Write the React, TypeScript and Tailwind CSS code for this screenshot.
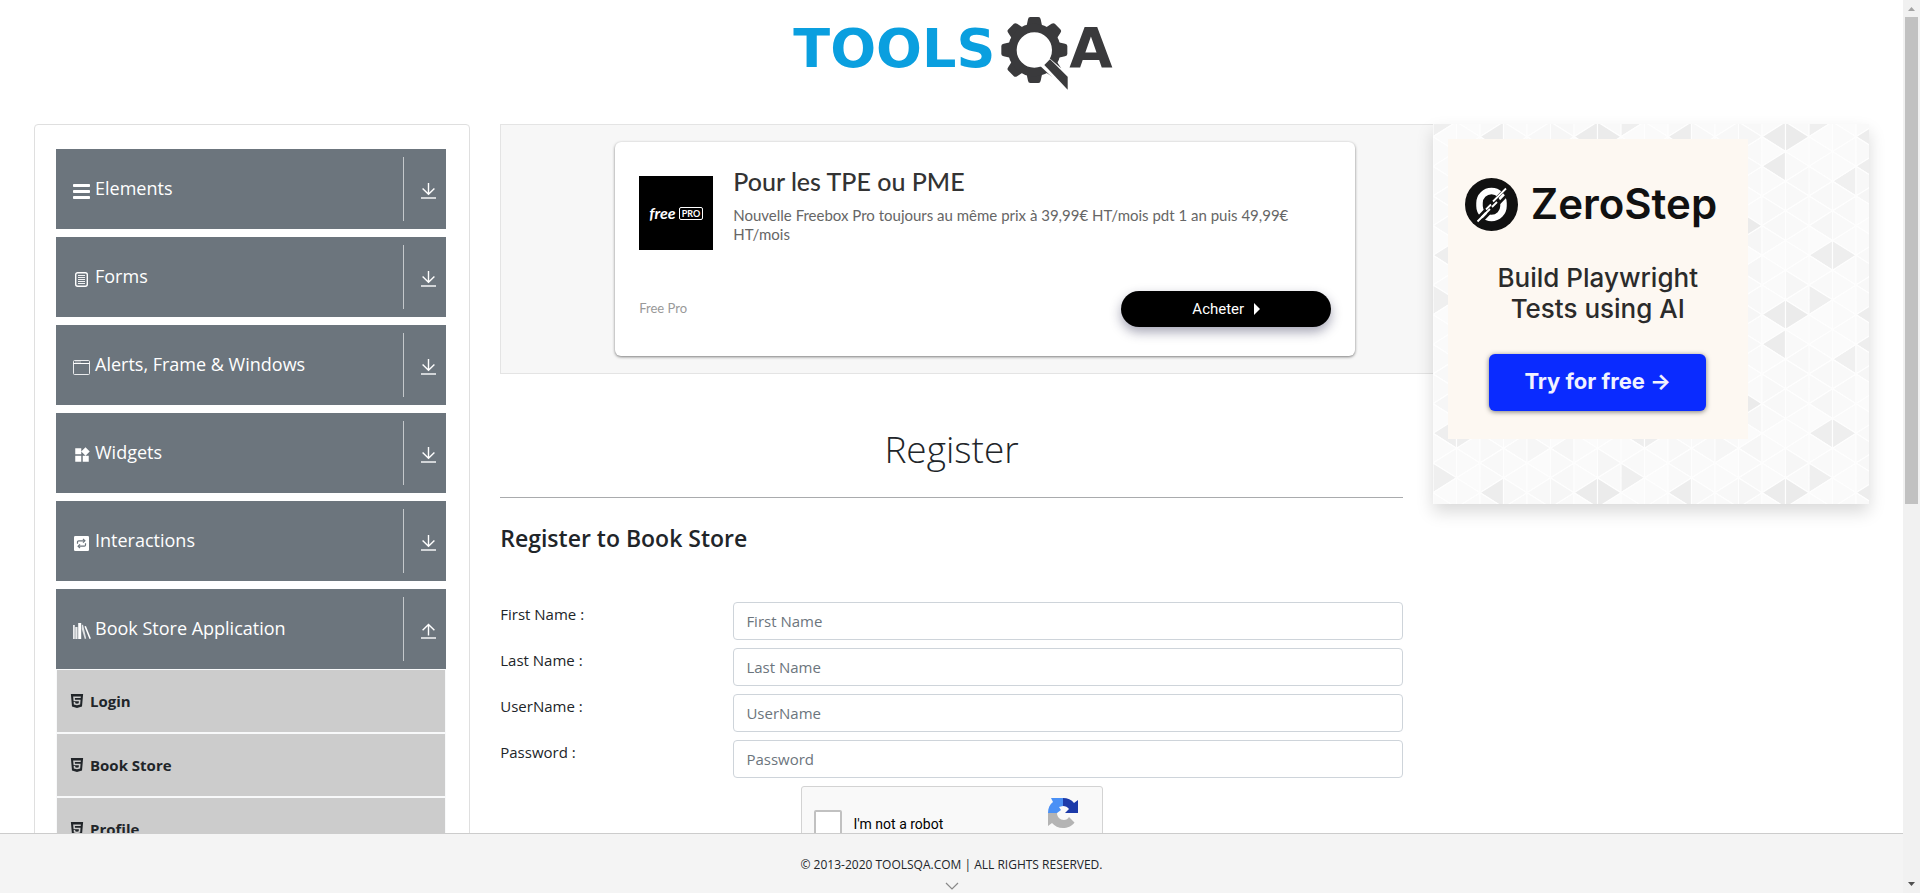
import type { ReactNode } from "react";
import { MdWidgets } from "react-icons/md";
import { SiHtml5 } from "react-icons/si";

/* ---------- icons ---------- */

const BarsIcon = () => (
  <svg viewBox="0 0 17 15" className="h-[15px] w-[17px]" fill="currentColor">
    <rect x="0" y="0" width="17" height="3" rx=".8" />
    <rect x="0" y="6" width="17" height="3" rx=".8" />
    <rect x="0" y="12" width="17" height="3" rx=".8" />
  </svg>
);

const FormIcon = () => (
  <svg viewBox="0 0 17 15" className="h-[15px] w-[17px]" fill="none" stroke="currentColor">
    <rect x="2.7" y=".7" width="11.6" height="13.6" rx="2" strokeWidth="1.4" />
    <path d="M5 3.5h7M5 5.5h7M5 7.5h7M5 9.5h7M5 11.5h7" strokeWidth=".9" />
  </svg>
);

const WindowIcon = () => (
  <svg viewBox="0 0 17 15" className="h-[15px] w-[17px]" fill="none" stroke="currentColor">
    <rect x=".5" y=".5" width="16" height="14" rx="1" strokeOpacity=".85" />
    <path d="M.5 3.5h16" />
    <path d="M2.5 2h1M4.5 2h1M6.5 2h1" strokeWidth="1.2" />
  </svg>
);

const WidgetsIcon = () => <MdWidgets className="h-[18px] w-[18px]" />;

const RepeatIcon = () => (
  <svg viewBox="0 0 15 15" className="h-[15px] w-[15px]">
    <rect width="15" height="15" rx="1.2" fill="currentColor" />
    <g fill="none" stroke="#6c757d" strokeWidth="1.2">
      <path d="M3.5 7.8V6q0-1.2 1.2-1.2h5.6M11.5 7.2V9q0 1.2-1.2 1.2H4.7" />
      <path d="M9 3l1.9 1.8L9 6.6M6 8.4l-1.9 1.8L6 12" />
    </g>
  </svg>
);

const BooksIcon = () => (
  <svg viewBox="0 0 18 16" className="h-[16px] w-[18px]" fill="currentColor">
    <path d="M0 2h1.8v14H0zM2.3 4h2.2v12H2.3z" opacity=".85" />
    <path d="M5.2 0h3v16h-3z" />
    <path d="M8.8 2.2 10 1.6l3.2 13.8-1.4.6-3-10z" opacity=".8" />
    <path d="m11.4 3.6 1.5-.6 5 12.4-1.4.6z" />
  </svg>
);

const ArrowToLine = ({ up = false }: { up?: boolean }) => (
  <svg viewBox="0 0 15 16" className="h-4 w-[15px]" fill="none" stroke="currentColor" strokeWidth="1.4">
    <path d={up ? "M7.5 12.4V1.4M1.6 7.2l5.9-5.8 5.9 5.8" : "M7.5 0v11M1.6 5.4l5.9 5.8 5.9-5.8"} />
    <path d="M0 15h15" />
  </svg>
);

const Logo = () => (
  <svg viewBox="28 50 972 219" className="h-[73px] w-[324px] overflow-visible" role="img" aria-label="ToolsQA">
    <text x="38" y="201" fontFamily="DejaVu Sans, sans-serif" fontWeight="700" fontSize="162" fill="#0a9fdf">
      TOOLS
    </text>
    <g fill="#3a3a3c">
      {[0, 45, 90, 135, 180, 225, 270, 315].map((angle) => (
        <path
          key={angle}
          transform={`rotate(${angle} 761 149)`}
          d="M735 90l7-33q1-7 7-7h24q6 0 7 7l7 33z"
        />
      ))}
    </g>
    <circle cx="761" cy="149" r="66" fill="none" stroke="#3a3a3c" strokeWidth="26" />
    <path d="M778 196l25-25 65 55v55z" fill="#fff" />
    <path d="M791 194l17-17 53 52v39z" fill="#3a3a3c" />
    <text x="866" y="201" fontFamily="DejaVu Sans, sans-serif" fontWeight="700" fontSize="168" fill="#3a3a3c">
      A
    </text>
  </svg>
);

const ZeroStepMark = () => (
  <svg viewBox="0 0 53 53" className="h-[53px] w-[53px]">
    <circle cx="26.5" cy="26.5" r="26.5" fill="#111" />
    <rect x="14.500" y="13" width="24" height="27" rx="12" fill="none" stroke="#fff" strokeWidth="6.5" />
    <path d="M9 44 42 9M14 46 45 14" stroke="#111" strokeWidth="2.6" />
    <path d="M12.500 43.500 25 31M28 23.500 41 10.500M21 31.500l5-5M27 29l5-5" stroke="#fff" strokeWidth="1.8" />
  </svg>
);

const RecaptchaMark = () => (
  <svg viewBox="0 0 30 30" className="h-[30px] w-[30px]">
    <path d="M15 0v8l-4 1 2 3-4 3H0C0 10 1.800 6.500 5 4L3 0z" fill="#4a90f5" />
    <path d="M15 0c4.500 0 8.500 1.800 11 5l4-3v13H17l4-4c-1.500-2-3.500-3-6-3z" fill="#1c3aa9" />
    <path d="M0 15h9c0 4 3 7 7 7 2 0 4-1 5-3l5.500 5.500C23.500 28.500 19.500 30 15 30c-4.500 0-8.500-2-11-5L0 28z" fill="#b4b4b4" />
  </svg>
);

/* ---------- triangle mesh behind the side banner ---------- */

const COL = 23.5;
const ROW = 89 / 3;
const TINTS = ["#fafafa", "#f8f8f8", "#fbfbfb", "#f9f9f9", "#f6f6f6", "#fafafa", "#f9f9f9"];
const DARK: Record<string, string> = {
  "6:l:0": "#ececec",
  "7:r:0": "#ebebeb",
  "6:l:1": "#ececec",
  "1:l:1": "#f0f0f0",
  "0:l:4": "#eeeeee",
  "1:r:4": "#eeeeee",
  "5:r:3": "#ebebeb",
  "2:l:0": "#ededed",
  "2:l:1": "#eeeeee",
  "0:r:5": "#efefef",
};

function meshTriangles() {
  const shapes: { key: string; points: string; fill: string }[] = [];
  for (let c = 0; c < 8; c++) {
    for (let r = -1; r < 7; r++) {
      for (const dir of ["l", "r"]) {
        const apexCol = dir === "l" ? c : c + 1;
        const edgeCol = dir === "l" ? c + 1 : c;
        const y = (apexCol % 2 === 0 ? 12.7 : 27.5) + r * ROW;
        const row = (r + 6) % 6;
        const fill = DARK[`${c}:${dir}:${row}`] ?? TINTS[(c * 5 + row * 3 + (dir === "l" ? 2 : 0) + ((c * row) % 4)) % 7];
        shapes.push({
          key: `${c}${dir}${r}`,
          points: `${apexCol * COL},${y} ${edgeCol * COL},${y - ROW / 2} ${edgeCol * COL},${y + ROW / 2}`,
          fill,
        });
      }
    }
  }
  return shapes;
}

const Mesh = () => (
  <svg className="absolute inset-0 h-full w-full" aria-hidden="true">
    <defs>
      <pattern id="mesh" width="188" height="178" patternUnits="userSpaceOnUse">
        {meshTriangles().map((t) => (
          <polygon key={t.key} points={t.points} fill={t.fill} stroke="#fefefe" strokeWidth="1.2" />
        ))}
      </pattern>
    </defs>
    <rect width="100%" height="100%" fill="url(#mesh)" />
  </svg>
);

/* ---------- sections ---------- */

type Group = { label: string; icon: ReactNode; items?: string[] };

const groups: Group[] = [
  { label: "Elements", icon: <BarsIcon /> },
  { label: "Forms", icon: <FormIcon /> },
  { label: "Alerts, Frame & Windows", icon: <WindowIcon /> },
  { label: "Widgets", icon: <WidgetsIcon /> },
  { label: "Interactions", icon: <RepeatIcon /> },
  { label: "Book Store Application", icon: <BooksIcon />, items: ["Login", "Book Store", "Profile"] },
];

const Sidebar = () => (
  <nav className="flex flex-col gap-2 rounded border border-[#dfdfdf] py-6 pr-[23px] pl-[21px]">
    {groups.map((g) => (
      <div key={g.label}>
        <button
          type="button"
          aria-expanded={!!g.items}
          className="flex h-20 w-full items-center bg-[#6c757d] pl-4 text-left text-white"
        >
          <span className="flex w-[23px] items-center pt-1">
            <span className="flex w-[19px] justify-center">{g.icon}</span>
          </span>
          <span className="flex-1 pb-[2px] text-[18px] leading-6">{g.label}</span>
          <span className="flex h-16 w-[43px] items-center border-l border-[#c4c8cb] pt-1 pl-[17px]">
            <ArrowToLine up={!!g.items} />
          </span>
        </button>
        {g.items && (
          <ul>
            {g.items.map((item) => (
              <li key={item} className="border border-[#f8f9fa] bg-[#ccc]">
                <a href={`#${item}`} className="flex h-[62px] items-center gap-[6px] pl-[13px] text-[15px] font-bold">
                  <SiHtml5 className="h-[14px] w-[14px]" />
                  {item}
                </a>
              </li>
            ))}
          </ul>
        )}
      </div>
    ))}
  </nav>
);

const TopBanner = () => (
  <section className="flex h-[250px] w-[970px] justify-center border border-[#e4e4e4] bg-[#f7f7f7] py-[17px] font-[Lato,sans-serif]">
    <div className="flex w-[740px] flex-col justify-between rounded-md bg-white px-6 pt-[23px] pb-[29px] shadow-[0_1px_3px_rgba(0,0,0,0.5)]">
      <div className="flex gap-5">
        <div className="mt-[11px] flex h-[74px] w-[74px] shrink-0 items-center justify-center gap-[3px] bg-black text-white">
          <span className="text-[16px] leading-none font-bold italic">free</span>
          <span className="rounded-[2px] border border-white px-[2px] text-[9px] leading-[11px] font-bold">PRO</span>
        </div>
        <div>
          <h2 className="text-[25px] leading-8 font-medium text-[#333]">Pour les TPE ou PME</h2>
          <p className="mt-[9px] text-[15px] leading-[19px] text-[#666]">
            Nouvelle Freebox Pro toujours au même prix à 39,99€ HT/mois pdt 1 an puis 49,99€ HT/mois
          </p>
        </div>
      </div>
      <div className="flex items-center justify-between">
        <span className="text-[13px] text-[#999]">Free Pro</span>
        <button
          type="button"
          className="flex h-9 w-[210px] items-center justify-center gap-[10px] rounded-full bg-black font-[Roboto,sans-serif] text-[15px] text-white shadow-[0_5px_12px_rgba(30,30,70,0.4)]"
        >
          Acheter
          <svg viewBox="0 0 6 12" className="h-3 w-[6px]" fill="currentColor">
            <path d="M0 0l6 6-6 6z" />
          </svg>
        </button>
      </div>
    </div>
  </section>
);

const SideBanner = () => (
  <aside className="relative z-10 h-[380px] bg-[#fafafa] p-[15px] font-[Inter,sans-serif] shadow-[0_8px_16px_rgba(0,0,0,0.15)]">
    <Mesh />
    <div className="relative flex h-[300px] w-[300px] flex-col items-center bg-[#fdf8f2] pt-[38px]">
      <div className="flex items-center gap-[13px] self-start pl-[17px]">
        <ZeroStepMark />
        <span className="text-[42px] leading-[54px] font-semibold text-[#111]">ZeroStep</span>
      </div>
      <p className="mt-[31px] text-center text-[26px] leading-[31px] font-medium text-[#2b2b2b]">
        Build Playwright
        <br />
        Tests using AI
      </p>
      <button
        type="button"
        className="mt-[30px] h-[57px] w-[217px] rounded-md bg-[#0a2bff] pb-[2px] text-[22px] font-bold text-[#f0f2ff] shadow-[0_1px_5px_rgba(0,0,0,0.5)]"
      >
        Try for free →
      </button>
    </div>
  </aside>
);

const fields = [
  { id: "firstname", label: "First Name", type: "text" },
  { id: "lastname", label: "Last Name", type: "text" },
  { id: "userName", label: "UserName", type: "text" },
  { id: "password", label: "Password", type: "password" },
];

const RegisterForm = () => (
  <form>
    {fields.map((f) => (
      <div key={f.id} className="mb-2 grid grid-cols-4 gap-x-[30px]">
        <label htmlFor={f.id} className="text-[15px] leading-6">
          {f.label} :
        </label>
        <input
          id={f.id}
          type={f.type}
          placeholder={f.label}
          className="col-span-3 h-[38px] rounded border border-[#ced4da] bg-white px-3 text-[15px] placeholder:text-[#6c757d]"
        />
      </div>
    ))}
    <div className="flex justify-center">
      <div className="flex h-[76px] w-[302px] justify-between rounded-[3px] border border-[#d3d3d3] bg-[#f9f9f9] pr-6 pl-3 font-[Roboto,sans-serif] text-[14px] text-black">
        <label className="flex items-center gap-3">
          <input type="checkbox" className="h-7 w-7 appearance-none rounded-[2px] border-2 border-[#c1c1c1] bg-white" />
          I'm not a robot
        </label>
        <div className="pt-[11px]">
          <RecaptchaMark />
        </div>
      </div>
    </div>
  </form>
);

const ScrollTrack = () => (
  <div className="flex w-[17px] shrink-0 flex-col items-center justify-between bg-[#f1f1f1]" aria-hidden="true">
    <div className="flex w-full flex-1 flex-col items-center">
      <svg viewBox="0 0 17 17" className="h-[17px] w-[17px]" fill="#a3a3a3">
        <path d="M5 11l3.500-4 3.500 4z" />
      </svg>
      <div className="h-5/9 w-[13px] bg-[#c1c1c1]" />
    </div>
    <svg viewBox="0 0 17 17" className="h-[17px] w-[17px]" fill="#505050">
      <path d="M5 6l3.500 4 3.500-4z" />
    </svg>
  </div>
);

export default function App() {
  return (
    <div className="flex h-screen bg-white font-['Open_Sans',sans-serif] text-[#212529]">
      <div className="flex min-w-0 flex-1 flex-col">
        <div className="min-h-0 flex-1 overflow-x-hidden overflow-y-auto [scrollbar-width:none]">
          <header className="flex h-[124px] justify-center pt-[17px]">
            <a href="#home" className="h-[73px]">
              <Logo />
            </a>
          </header>
          <div className="grid grid-cols-4 gap-x-[30px] px-[34px]">
            <Sidebar />
            <main className="col-span-2 min-w-0">
              <TopBanner />
              <h1 className="pt-[47px] text-center text-[37px] leading-[56px] font-light">Register</h1>
              <hr className="mt-5 border-[#a9abad]" />
              <h2 className="mt-[25px] mb-[49px] text-[23px] leading-[30px] font-semibold">Register to Book Store</h2>
              <RegisterForm />
            </main>
            <SideBanner />
          </div>
        </div>
        <footer className="flex h-[60px] shrink-0 flex-col items-center border-t border-[#ccc] bg-[#f4f4f4] pt-[21px]">
          <p className="text-[12px] leading-[20px]">© 2013-2020 TOOLSQA.COM | ALL RIGHTS RESERVED.</p>
          <svg viewBox="0 0 14 8" className="mt-[7px] h-2 w-[14px]" fill="none" stroke="#888" strokeWidth="1.2">
            <path d="M1 1l6 6 6-6" />
          </svg>
        </footer>
      </div>
      <ScrollTrack />
    </div>
  );
}
